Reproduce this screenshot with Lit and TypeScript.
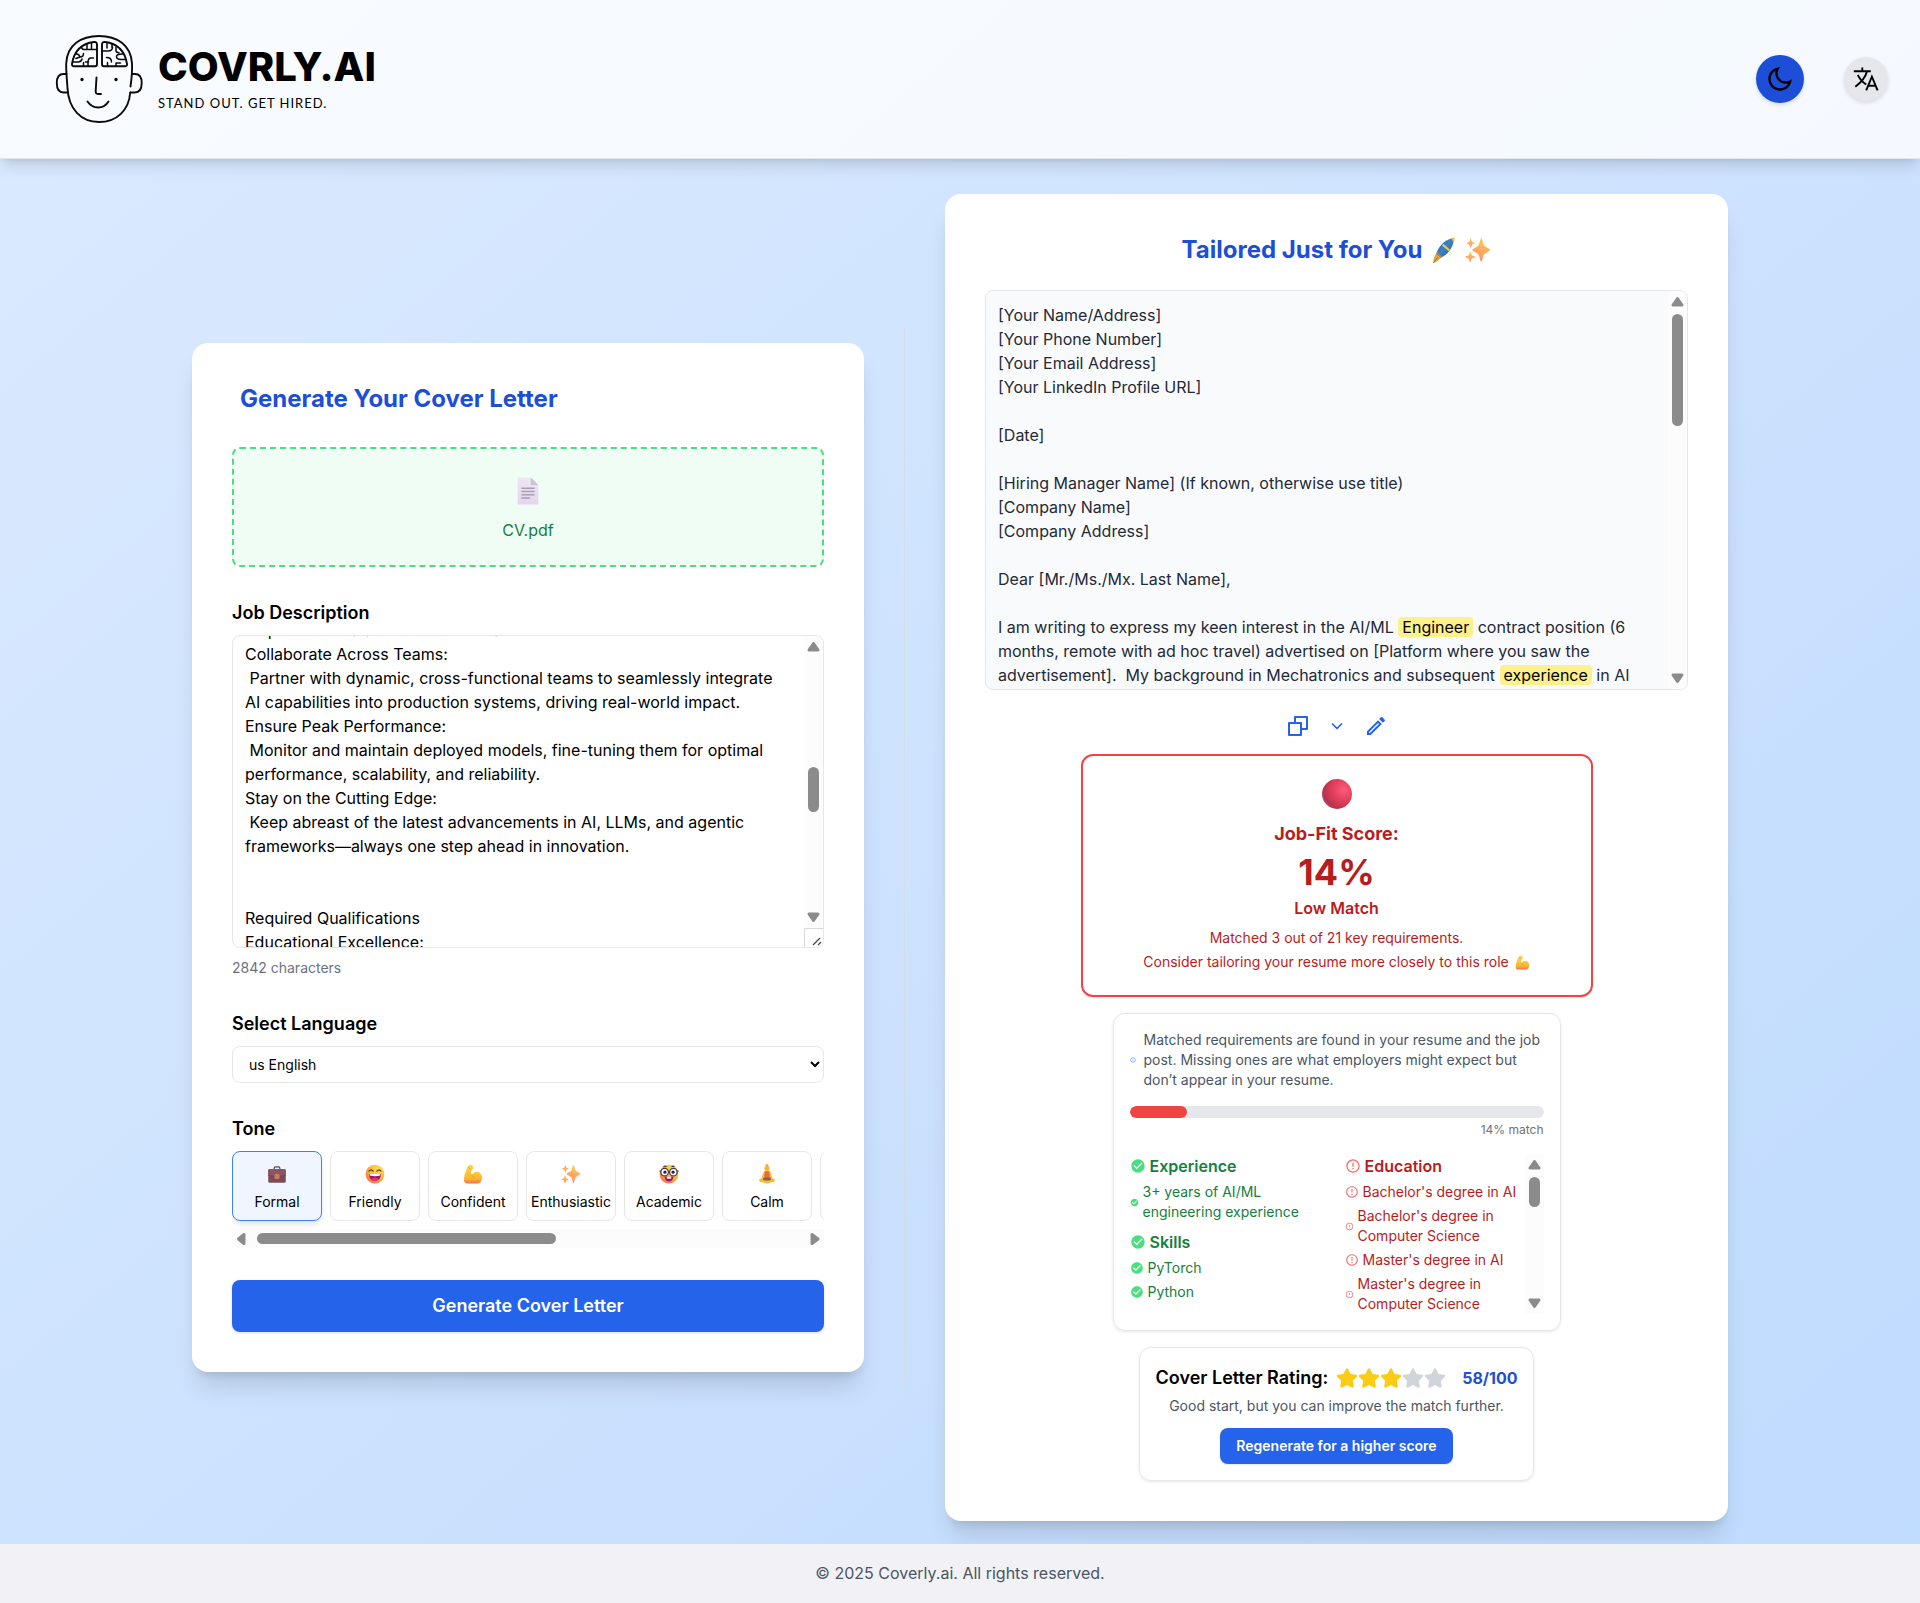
import { LitElement, html, svg, css } from "lit";
import { customElement, state, query } from "lit/decorators.js";
import { classMap } from "lit/directives/class-map.js";

const base = css`
  *,
  *::before,
  *::after {
    box-sizing: border-box;
  }
  :host {
    display: block;
    font-family: Inter, "Noto Sans", sans-serif;
    font-size: 16px;
    line-height: 24px;
  }
  h1, h2, h3, p, ul, pre {
    margin: 0;
    padding: 0;
  }
  ul {
    list-style: none;
  }
  button, select, textarea {
    font-family: inherit;
    color: inherit;
    margin: 0;
  }
  button {
    cursor: pointer;
  }
  svg {
    display: block;
    flex: none;
  }
`;

/* ---------- scroll bars ---------- */

@customElement("scroll-bar")
class ScrollBar extends LitElement {
  static properties = {
    horizontal: { type: Boolean, reflect: true },
    offset: { type: Number },
    length: { type: Number },
  };
  declare horizontal: boolean;
  declare offset: number;
  declare length: number;

  constructor() {
    super();
    this.horizontal = false;
    this.offset = 0;
    this.length = 40;
  }

  static styles = css`
    :host {
      display: flex;
      flex-direction: column;
      align-items: center;
      flex: none;
      width: 19px;
      background: #fcfcfc;
    }
    :host([horizontal]) {
      flex-direction: row;
      width: auto;
      height: 19px;
    }
    svg {
      display: block;
      flex: none;
      fill: #8b8b8b;
      stroke: #8b8b8b;
      stroke-width: 3;
      stroke-linejoin: round;
    }
    .track {
      flex: 1;
      display: flex;
      flex-direction: column;
      width: 11px;
      min-height: 0;
    }
    .thumb {
      border-radius: 6px;
      background: #8b8b8b;
    }
    :host([horizontal]) .track {
      flex-direction: row;
      width: auto;
      height: 11px;
    }
  `;

  render() {
    const h = this.horizontal;
    const first = h ? "M12 5.5v9L6.500 10z" : "M5 14h9L9.500 7.500z";
    const last = h ? "M7 5.500v9l6-4.500z" : "M5 5h9l-4.500 6.500z";
    const place = h
      ? `margin-left:${this.offset}%;width:${this.length}%`
      : `margin-top:${this.offset}px;height:${this.length}px`;
    return html`
      <svg width="19" height="19" viewBox="0 0 19 19" aria-hidden="true"><path d=${first} /></svg>
      <div class="track"><div class="thumb" style=${place}></div></div>
      <svg width="19" height="19" viewBox="0 0 19 19" aria-hidden="true"><path d=${last} /></svg>
    `;
  }
}

/* ---------- pictograms ---------- */

const yellow = (id: string) => svg`
  <radialGradient id=${id} cx="0.7" cy="0.25" r="0.9">
    <stop offset="0" stop-color="#ffe24f" /><stop offset="0.55" stop-color="#fdb52c" /><stop offset="1" stop-color="#f0624e" />
  </radialGradient>`;

const pictures: Record<string, unknown> = {
  page: svg`
    <defs><linearGradient id="pg" x1="0" y1="0" x2="0" y2="1"><stop offset="0" stop-color="#eee6f4" /><stop offset="1" stop-color="#e2d6ee" /></linearGradient></defs>
    <path d="M5 1.500h14l8 8V30.500H5z" fill="url(#pg)" /><path d="M19 1.500l8 8h-8z" fill="#c9c2d1" />
    <path d="M9 13h14M9 16.500h14M9 20h14M9 23.500h9" stroke="#a79fb3" stroke-width="1.500" />`,
  briefcase: svg`
    <path d="M11.500 9V6.500a2 2 0 0 1 2-2h5a2 2 0 0 1 2 2V9" fill="none" stroke="#5f4552" stroke-width="2" />
    <rect x="2" y="8" width="28" height="22" rx="2.500" fill="#7c4b58" />
    <path d="M2 10.500A2.500 2.500 0 0 1 4.500 8h23a2.500 2.500 0 0 1 2.500 2.500V18l-4 1.500H6L2 18z" fill="#8a5561" />
    <path d="M2 18.200l4 1.300h20l4-1.300" fill="none" stroke="#5f3a49" stroke-width="1" />
    <rect x="12" y="16" width="8" height="8" rx="2" fill="#cf7a5c" />`,
  grin: svg`
    <defs>${yellow("yg")}</defs><circle cx="16" cy="16" r="15" fill="url(#yg)" />
    <path d="M6.500 11.500q3.500-4.500 6.500 0M19 11.500q3.500-4.500 6.500 0" fill="none" stroke="#553148" stroke-width="2" stroke-linecap="round" />
    <path d="M6.500 16h19c0 7-4 11-9.500 11S6.500 23 6.500 16z" fill="#a50f73" /><path d="M7.500 16h17v2.500q-8.500 2.500-17 0z" fill="#fff" />
    <path d="M10.500 24q5.500-5 11 0-2 3-5.500 3t-5.500-3z" fill="#e8307d" />`,
  arm: svg`
    <defs><linearGradient id="am" x1="0.5" y1="0" x2="0.5" y2="1"><stop offset="0.2" stop-color="#ffd23c" /><stop offset="0.75" stop-color="#fdb62e" /><stop offset="1" stop-color="#ee7059" /></linearGradient></defs>
    <path d="M8 4c2-3 7-3 8 0 1 4-1 6-3 7-.5 3 .5 6 2 6 2-6 13-7 15 2 1 6-1 12-7 12H7c-4 0-6-2-5.500-7C2 17 5 9 8 4z" fill="url(#am)" />
    <path d="M14.500 17c0 3 2 5 4 5M9 5.500l3 3" stroke="#e2912a" stroke-width="1.300" fill="none" stroke-linecap="round" />`,
  sparkles: svg`
    <defs><linearGradient id="sp" x1="0.600" y1="0" x2="0.300" y2="1"><stop offset="0" stop-color="#ffc94c" /><stop offset="1" stop-color="#ff8f72" /></linearGradient></defs>
    <g fill="url(#sp)"><path d="M20 1.500c1.300 0 2 7 3.500 9S31 14.500 31 16s-6 3.500-7.500 5.500S21.300 30.500 20 30.500 18 23.500 16.500 21.500 9 17.500 9 16s6-3.500 7.500-5.500S18.700 1.500 20 1.500z" />
    <path d="M7 1.500c.800 0 1 3.500 1.700 4.200S12 6.800 12 7.500 9.500 8.600 8.700 9.400 7.800 13 7 13s-1-2.900-1.700-3.600S2 8.300 2 7.500s2.500-1.100 3.300-1.800S6.200 1.500 7 1.500z" />
    <path d="M6.500 18c.9 0 1.200 3.800 2 4.600s4 1.100 4 1.900-3.200 1.200-4 2-1.100 4.500-2 4.500-1.200-3.700-2-4.500-4-1.200-4-2 3.200-1.100 4-1.900 1.100-4.600 2-4.600z" /></g>`,
  nerd: svg`
    <defs>${yellow("yn")}</defs><circle cx="16" cy="16" r="15" fill="url(#yn)" />
    <path d="M9 20h14c0 5-3 8-7 8s-7-3-7-8z" fill="#a50f73" /><path d="M12.500 20h7v3.500h-7z" fill="#fff" />
    <g fill="#fff" stroke="#4d3b4b" stroke-width="2"><circle cx="9" cy="13" r="6" /><circle cx="23" cy="13" r="6" /></g>
    <path d="M15 12q1-1 2 0M0.800 11l2.200 1M31.200 11 29 12M7 4.500q3-2 5 0M20 4.500q2-2 5 0" fill="none" stroke="#4d3b4b" stroke-width="1.800" />
    <circle cx="9.500" cy="13" r="2.500" fill="#3a2438" /><circle cx="22.500" cy="13" r="2.500" fill="#3a2438" />`,
  lotus: svg`
    <circle cx="16" cy="2.800" r="2.300" fill="#e0a01f" /><circle cx="16" cy="6.800" r="4.200" fill="#f8b52f" />
    <path d="M11.500 11.500c2.500-1.500 6.500-1.500 9 0 2 3 3 7 4 11l-3 1-3-6v5h-5v-5l-3 6-3-1c1-4 2-8 4-11z" fill="#fbbd33" />
    <path d="M12.500 11.500h7l1 11h-9z" fill="#f4652f" />
    <path d="M3.500 25c3.500-3 8-3 12.500-2 4.500-1 9-1 12.500 2 1 3-2 4-5 4L16 31l-7.500-2c-3 0-6-1-5-4z" fill="#fdb92c" />
    <path d="M10.500 21.500h11l1 3.500q-6.500 3-13 0z" fill="#7b6073" />`,
  feather: svg`
    <defs><linearGradient id="ft" x1="0" y1="0" x2="1" y2="1"><stop offset="0" stop-color="#1f5f9f" /><stop offset="0.500" stop-color="#3b83c6" /><stop offset="1" stop-color="#1d558f" /></linearGradient></defs>
    <path d="M4 30.500c0-4 1-8 4-12l6 5c-3 3.500-6 5.500-9.500 7.500z" fill="#e0a443" />
    <path d="M7.500 20C10 11 17 4 26 1.500c1.500 0 2 1 2 2.500C27 13 21.500 20 13 24.500z" fill="url(#ft)" />
    <path d="M25 1.500l4.500-.5-1 6z" fill="#f6bc3e" /><path d="M15 9l8 7" stroke="#fbc441" stroke-width="2.500" /><path d="M8.200 18.500l5.500 5.500" stroke="#c98a2c" stroke-width="1.500" /><path d="M4 30.500l5-6" stroke="#8b5a2e" stroke-width="1" />`,
  ball: svg`
    <defs><radialGradient id="bl" cx="0.720" cy="0.360" r="0.750"><stop offset="0" stop-color="#ff5a7e" /><stop offset="0.550" stop-color="#dd3d58" /><stop offset="0.900" stop-color="#b5344d" /><stop offset="1" stop-color="#b0566b" /></radialGradient></defs>
    <circle cx="16" cy="16" r="15" fill="url(#bl)" />`,
};

const picture = (name: string, size: number) =>
  html`<svg width=${size} height=${size} viewBox="0 0 32 32" aria-hidden="true">${pictures[name]}</svg>`;

const glyphs = {
  moon: "M10 7C10 10.866 13.134 14 17 14C18.9584 14 20.729 13.1957 21.9995 11.8995C22 11.933 22 11.9665 22 12C22 17.5228 17.5228 22 12 22C6.47715 22 2 17.5228 2 12C2 6.47715 6.47715 2 12 2C12.0335 2 12.067 2 12.1005 2.00049C10.8043 3.27098 10 5.04157 10 7ZM4 12C4 16.4183 7.58172 20 12 20C15.0583 20 17.7158 18.2839 19.062 15.7621C18.3945 15.9187 17.7035 16 17 16C12.0294 16 8 11.9706 8 7C8 6.29648 8.08133 5.60547 8.2379 4.938C5.71611 6.28423 4 8.9417 4 12Z",
  pencil:
    "M14.06 9.02l.92.92L5.92 19H5v-.92l9.06-9.06M17.66 3c-.25 0-.51.1-.7.29l-1.83 1.83 3.75 3.75 1.83-1.83c.39-.39.39-1.02 0-1.41l-2.34-2.34c-.2-.2-.45-.29-.71-.29zm-3.6 3.19L3 17.25V21h3.75L17.81 9.94l-3.75-3.75z",
  check: "M12 2C6.48 2 2 6.48 2 12s4.48 10 10 10 10-4.48 10-10S17.52 2 12 2zm-2 15l-5-5 1.41-1.41L10 14.17l7.59-7.59L19 8l-9 9z",
  alert:
    "M11 15h2v2h-2zm0-8h2v6h-2zm.99-5C6.47 2 2 6.48 2 12s4.47 10 9.99 10C17.52 22 22 17.52 22 12S17.52 2 11.99 2zM12 20c-4.42 0-8-3.58-8-8s3.58-8 8-8 8 3.58 8 8-3.58 8-8 8z",
  info: "M11 7h2v2h-2zm0 4h2v6h-2zm1-9C6.48 2 2 6.48 2 12s4.48 10 10 10 10-4.48 10-10S17.52 2 12 2zm0 18c-4.41 0-8-3.59-8-8s3.59-8 8-8 8 3.59 8 8-3.59 8-8 8z",
};

const glyph = (name: keyof typeof glyphs, size: number) =>
  html`<svg width=${size} height=${size} viewBox="0 0 24 24" fill="currentColor" aria-hidden="true"><path d=${glyphs[name]} /></svg>`;

/* ---------- header ---------- */

@customElement("site-header")
class SiteHeader extends LitElement {
  static styles = [
    base,
    css`
      :host {
        position: relative;
      }
      header {
        display: flex;
        align-items: center;
        justify-content: space-between;
        height: 159px;
        padding: 0 32px 0 50px;
        background: rgba(255, 255, 255, 0.8);
        border-bottom: 1px solid #e5e7eb;
        box-shadow: 0 10px 15px -3px rgba(0, 0, 0, 0.12), 0 4px 6px -4px rgba(0, 0, 0, 0.12);
      }
      .brand {
        display: flex;
        align-items: center;
        gap: 8px;
        color: #000;
        text-decoration: none;
      }
      .words {
        display: flex;
        flex-direction: column;
        gap: 4px;
      }
      .name {
        font-size: 40px;
        line-height: 44px;
        font-weight: 800;
      }
      .tag {
        font-family: Lato, "Noto Sans", sans-serif;
        font-size: 13px;
        line-height: 20px;
        letter-spacing: 1px;
      }
      .tools {
        display: flex;
        align-items: center;
        gap: 40px;
      }
      .tool {
        display: grid;
        place-items: center;
        padding: 0;
        border: 0;
        border-radius: 50%;
        width: 44px;
        height: 44px;
        color: #000;
        background: #e5e7eb;
        box-shadow: 0 2px 4px rgba(0, 0, 0, 0.12);
      }
      .theme {
        width: 48px;
        height: 48px;
        background: #1d4ed8;
      }
    `,
  ];

  render() {
    return html`
      <header>
        <a class="brand" href="#">
          <svg width="100" height="96" viewBox="0 0 100 96" fill="none" stroke="#0b0b0b" stroke-width="1.900" stroke-linecap="round" stroke-linejoin="round" aria-hidden="true">
            <path d="M80.500 55.500c1-7 2-14 1.500-23C81 14 67 5 49 5S17 14 16.200 32.500C16 41 17 49 17.500 57 18.500 78 31 91 49 91s30-12 31.200-29.500" />
            <path d="M16.500 43h-3C8.500 43 6.800 46.500 6.800 52s1.700 9.500 6.700 9.500h4M82 43h3c5 0 6.700 4 6.700 9s-2 9.500-7 9.500h-4" />
            <path d="M47 13.500c0-2-1-2.700-3-2.500C31.500 12.500 24 20.500 22 33c-.2 1.500.5 2.200 2 2.200h21c1.300 0 2-.700 2-2zM52 13.500c0-2 1-2.700 3-2.500 12.500 1.500 20 9.500 22 22 .2 1.500-.500 2.200-2 2.200H54c-1.300 0-2-.700-2-2z" />
            <g stroke-width="1.500">
              <path d="M37 13v4.500M41.500 12v6.500H47M41.500 18.500h-7.500c-2 0-2.500-1.500-2.500-3M26.500 23c2 .2 3 1 3.500 3l-4 1.500M30 26c2.500 0 3.500-1.500 3.500-3.500M23 31h5c2.500 0 3.500-1 4-3M33.500 35v-3.500M38 35v-3.500c0-3 1.200-4.500 3-4.500h2.500M38.500 31h-3" />
              <path d="M57 12v5M62 13v4M52 20h6c3 0 4.500-1.500 4.500-4M66 16v3.500c0 1.500 1 2.200 3 2.200M72.500 23c-4 0-6 .5-6 2.500s1.500 3 4.500 3h4M56.500 26.500c3 0 5 1.200 5 4.500M66 35v-3h4.500M57.500 31.500V35" />
            </g>
            <path d="M46.500 46.500L45.700 60c-.1 2 .500 3 2.300 3h3M37.500 70.500c5.500 8 16 8 21 0" />
            <circle cx="32" cy="48.500" r="1.100" fill="#0b0b0b" stroke-width="1.200" /><circle cx="66" cy="48.500" r="1.100" fill="#0b0b0b" stroke-width="1.200" />
          </svg>
          <span class="words"><span class="name">COVRLY.AI</span><span class="tag">STAND OUT. GET HIRED.</span></span>
        </a>
        <div class="tools">
          <button class="tool theme" type="button" aria-label="Dark mode">${glyph("moon", 28)}</button>
          <button class="tool" type="button" aria-label="Change language">
            <svg width="26" height="24" viewBox="0 0 26 24" fill="none" stroke="currentColor" stroke-width="1.900" aria-hidden="true">
              <path d="M.8 4.200h17M9.300.500v3.700M14 4.500C12.500 10 8 15.500 2.300 19.700M4.800 7.800c1.700 3.800 4.700 7.200 8.400 9.700M13.200 23.300L18.900 9.700l5.700 13.600M15.200 18.700h7.400" />
            </svg>
          </button>
        </div>
      </header>
    `;
  }
}

/* ---------- form ---------- */

const jobText = ` Implement scalable AI solutions across cloud environments.
Collaborate Across Teams:
 Partner with dynamic, cross-functional teams to seamlessly integrate AI capabilities into production systems, driving real-world impact.
Ensure Peak Performance:
 Monitor and maintain deployed models, fine-tuning them for optimal performance, scalability, and reliability.
Stay on the Cutting Edge:
 Keep abreast of the latest advancements in AI, LLMs, and agentic frameworks—always one step ahead in innovation.


Required Qualifications
Educational Excellence:
 Bachelor's or Master's degree in Computer Science or AI.`;

const tones = [
  ["briefcase", "Formal"],
  ["grin", "Friendly"],
  ["arm", "Confident"],
  ["sparkles", "Enthusiastic"],
  ["nerd", "Academic"],
  ["lotus", "Calm"],
  ["feather", "Creative"],
];

@customElement("letter-form")
class LetterForm extends LitElement {
  @state() private tone = "Formal";
  @query("textarea") private area!: HTMLTextAreaElement;

  static styles = [
    base,
    css`
      form {
        display: flex;
        flex-direction: column;
        gap: 32px;
        padding: 40px;
        background: #fff;
        border-radius: 16px;
        box-shadow: 0 20px 25px -5px rgba(0, 0, 0, 0.12), 0 8px 10px -6px rgba(0, 0, 0, 0.12);
      }
      h2 {
        padding: 0 8px;
        font-size: 24px;
        line-height: 32px;
        font-weight: 700;
        color: #1d4ed8;
      }
      .drop {
        display: flex;
        flex-direction: column;
        align-items: center;
        justify-content: center;
        gap: 12px;
        height: 120px;
        padding-top: 4px;
        border: 2px dashed #4ade80;
        border-radius: 8px;
        background: #f0fdf4;
        color: #15803d;
      }
      .field {
        display: flex;
        flex-direction: column;
        gap: 8px;
        min-width: 0;
      }
      .label {
        font-size: 18px;
        line-height: 28px;
        font-weight: 600;
        color: #000;
      }
      .area {
        display: flex;
        height: 313px;
        border: 1px solid #e5e7eb;
        border-radius: 8px;
        overflow: hidden;
        background: #fff;
      }
      textarea {
        flex: 1;
        min-width: 0;
        padding: 12px;
        border: 0;
        outline: 0;
        resize: none;
        overflow: hidden;
        background: none;
        font-size: 16px;
        line-height: 24px;
        color: #000;
      }
      .side {
        display: flex;
        flex-direction: column;
        width: 19px;
      }
      .side scroll-bar {
        flex: 1;
      }
      .grip {
        height: 19px;
        border-top: 1px solid #d9d9d9;
        border-left: 1px solid #d9d9d9;
      }
      .count {
        padding-top: 2px;
        font-size: 14px;
        line-height: 20px;
        color: #6b7280;
      }
      select {
        width: 100%;
        height: 37px;
        padding: 0 0 0 12px;
        border: 1px solid #e5e7eb;
        border-radius: 8px;
        background-color: #fff;
        font-size: 14px;
        color: #000;
      }
      .tones {
        display: flex;
        gap: 8px;
        padding-bottom: 8px;
        overflow: hidden;
      }
      .tone {
        display: flex;
        flex: none;
        flex-direction: column;
        align-items: center;
        gap: 4px;
        width: 90px;
        height: 70px;
        padding: 8px 0;
        border: 1px solid #e5e7eb;
        border-radius: 8px;
        background: #fff;
        font-size: 14px;
        line-height: 20px;
        color: #000;
      }
      .tone.on {
        border-color: #3b82f6;
        background: #eff6ff;
        box-shadow: 0 4px 6px -1px rgba(0, 0, 0, 0.12);
      }
      .pic {
        display: grid;
        place-items: center;
        height: 28px;
      }
      .submit {
        height: 52px;
        border: 0;
        border-radius: 8px;
        background: #2563eb;
        box-shadow: 0 1px 3px rgba(0, 0, 0, 0.15);
        font-size: 18px;
        line-height: 28px;
        font-weight: 600;
        color: #fff;
      }
    `,
  ];

  firstUpdated() {
    this.area.scrollTop = 30;
    document.fonts?.ready.then(() => (this.area.scrollTop = 30));
  }

  render() {
    return html`
      <form @submit=${(e: Event) => e.preventDefault()}>
        <h2>Generate Your Cover Letter</h2>
        <div class="drop">${picture("page", 30)}<span>CV.pdf</span></div>
        <div class="field">
          <label class="label" for="job">Job Description</label>
          <div class="area">
            <textarea id="job" .value=${jobText}></textarea>
            <div class="side">
              <scroll-bar .offset=${112} .length=${45}></scroll-bar>
              <div class="grip">
                <svg width="18" height="18" viewBox="0 0 18 18" stroke="#444" stroke-width="1.300" aria-hidden="true"><path d="M8 16l7-7M13 16l3-3" /></svg>
              </div>
            </div>
          </div>
          <p class="count">2842 characters</p>
        </div>
        <div class="field">
          <label class="label" for="lang">Select Language</label>
          <select id="lang"><option>us English</option></select>
        </div>
        <div class="field">
          <span class="label" id="tone">Tone</span>
          <div>
            <div class="tones" role="group" aria-labelledby="tone">
              ${tones.map(
                ([pic, name]) => html`<button
                  type="button"
                  class=${classMap({ tone: true, on: name === this.tone })}
                  aria-pressed=${name === this.tone}
                  @click=${() => (this.tone = name)}
                >
                  <span class="pic">${picture(pic, 20)}</span>${name}
                </button>`
              )}
            </div>
            <scroll-bar horizontal .offset=${1} .length=${54}></scroll-bar>
          </div>
        </div>
        <button class="submit" type="submit">Generate Cover Letter</button>
      </form>
    `;
  }
}

/* ---------- result ---------- */

type Item = [text: string, icon: number];
const matched: [string, Item[]][] = [
  ["Experience", [["3+ years of AI/ML engineering experience", 9]]],
  ["Skills", [["PyTorch", 14], ["Python", 14]]],
];
const missing: [string, Item[]][] = [
  [
    "Education",
    [
      ["Bachelor's degree in AI", 14],
      ["Bachelor's degree in Computer Science", 9],
      ["Master's degree in AI", 14],
      ["Master's degree in Computer Science", 9],
    ],
  ],
];

@customElement("letter-result")
class LetterResult extends LitElement {
  private score = 14;

  static styles = [
    base,
    css`
      section {
        display: flex;
        flex-direction: column;
        align-items: center;
        gap: 16px;
        padding: 40px;
        background: #fff;
        border-radius: 16px;
        box-shadow: 0 20px 25px -5px rgba(0, 0, 0, 0.12), 0 8px 10px -6px rgba(0, 0, 0, 0.12);
      }
      h2 {
        display: flex;
        align-items: center;
        gap: 8px;
        margin-bottom: 8px;
        font-size: 24px;
        line-height: 32px;
        font-weight: 700;
        color: #1d4ed8;
      }
      .letter {
        display: flex;
        width: 100%;
        height: 400px;
        border: 1px solid #e5e7eb;
        border-radius: 8px;
        overflow: hidden;
        background: #f9fafb;
      }
      .text {
        flex: 1;
        min-width: 0;
        padding: 12px;
        overflow: hidden;
        font-family: inherit;
        white-space: pre-wrap;
        color: #1f2937;
      }
      mark {
        padding: 0 4px;
        border-radius: 4px;
        background: #fef08a;
        color: #000;
      }
      .actions {
        display: flex;
        align-items: center;
        gap: 19px;
        padding-top: 8px;
      }
      .actions button {
        display: block;
        padding: 0;
        border: 0;
        background: none;
        color: #2563eb;
      }
      .fit {
        display: flex;
        flex-direction: column;
        align-items: center;
        width: 100%;
        max-width: 512px;
        padding: 20px 20px 21px;
        border: 2px solid #ef4444;
        border-radius: 12px;
        color: #b91c1c;
        text-align: center;
        box-shadow: 0 1px 2px rgba(0, 0, 0, 0.08);
      }
      .ball {
        display: grid;
        place-items: center;
        height: 36px;
        margin-bottom: 8px;
      }
      .fit h3 {
        font-size: 18px;
        line-height: 28px;
        font-weight: 700;
      }
      .percent {
        margin: 4px 0;
        font-size: 36px;
        line-height: 40px;
        font-weight: 700;
      }
      .level {
        margin-bottom: 6px;
        font-weight: 600;
      }
      .note {
        display: flex;
        align-items: center;
        gap: 6px;
        font-size: 14px;
      }
      .card {
        width: 100%;
        max-width: 448px;
        padding: 16px;
        border: 1px solid #e5e7eb;
        border-radius: 12px;
        box-shadow: 0 1px 3px rgba(0, 0, 0, 0.1);
        font-size: 14px;
        line-height: 20px;
      }
      .hint {
        display: flex;
        align-items: center;
        gap: 8px;
        color: #4b5563;
      }
      .hint svg {
        color: #3b82f6;
      }
      .bar {
        height: 12px;
        margin: 16px 0 4px;
        border-radius: 6px;
        background: #e5e7eb;
        overflow: hidden;
      }
      .fill {
        height: 12px;
        border-radius: 6px;
        background: #ef4444;
      }
      .value {
        margin-bottom: 16px;
        font-size: 12px;
        line-height: 16px;
        text-align: right;
        color: #6b7280;
      }
      .lists {
        display: grid;
        grid-template-columns: 1fr 1fr;
        gap: 16px;
        height: 160px;
      }
      .list {
        display: flex;
        min-width: 0;
      }
      .groups {
        display: flex;
        flex: 1;
        flex-direction: column;
        gap: 8px;
        min-width: 0;
      }
      .row {
        display: flex;
        align-items: center;
        gap: 4px;
      }
      .groups h4 {
        margin: 0;
        font-size: 16px;
        line-height: 24px;
        font-weight: 600;
      }
      li {
        margin-top: 4px;
      }
      .good {
        color: #15803d;
      }
      .good svg {
        color: #4ade80;
      }
      .bad {
        color: #b91c1c;
      }
      .bad svg {
        color: #f87171;
      }
      .rating {
        display: flex;
        flex-direction: column;
        align-items: center;
        width: auto;
      }
      .rate {
        display: flex;
        align-items: center;
        gap: 8px;
        font-size: 18px;
        line-height: 28px;
        font-weight: 600;
        color: #000;
      }
      .stars {
        display: flex;
        margin-right: 8px;
        color: #d1d5db;
      }
      .stars .lit {
        color: #facc15;
      }
      .points {
        font-size: 16px;
        font-weight: 700;
        color: #1d4ed8;
      }
      .advice {
        margin: 4px 0 12px;
        color: #4b5563;
      }
      .again {
        height: 36px;
        padding: 0 16px;
        border: 0;
        border-radius: 8px;
        background: #2563eb;
        box-shadow: 0 1px 2px rgba(0, 0, 0, 0.1);
        font-size: 14px;
        line-height: 20px;
        font-weight: 600;
        color: #fff;
      }
    `,
  ];

  private groups(data: [string, Item[]][], icon: "check" | "alert") {
    return html`<div class="groups">
      ${data.map(
        ([title, items]) => html`<div>
          <h4 class="row">${glyph(icon, 16)}${title}</h4>
          <ul>
            ${items.map(([text, size]) => html`<li class="row">${glyph(icon, size)}<span>${text}</span></li>`)}
          </ul>
        </div>`
      )}
    </div>`;
  }

  render() {
    const letter = html`[Your Name/Address]
[Your Phone Number]
[Your Email Address]
[Your LinkedIn Profile URL]

[Date]

[Hiring Manager Name] (If known, otherwise use title)
[Company Name]
[Company Address]

Dear [Mr./Ms./Mx. Last Name],

I am writing to express my keen interest in the AI/ML <mark>Engineer</mark> contract position (6 months, remote with ad hoc travel) advertised on [Platform where you saw the advertisement].  My background in Mechatronics and subsequent <mark>experience</mark> in AI`;
    return html`
      <section>
        <h2>Tailored Just for You ${picture("feather", 27)}${picture("sparkles", 26)}</h2>
        <div class="letter">
          <pre class="text">${letter}</pre>
          <scroll-bar .offset=${4} .length=${112}></scroll-bar>
        </div>
        <div class="actions">
          <button type="button" aria-label="Copy">
            <svg width="24" height="24" viewBox="0 0 24 24" fill="none" stroke="currentColor" stroke-width="2" stroke-linejoin="round"><path d="M3 9h12v12H3zM9 9V3h12v12h-6" /></svg>
          </button>
          <button type="button" aria-label="More options">
            <svg width="16" height="16" viewBox="0 0 16 16" fill="none" stroke="currentColor" stroke-width="1.700" stroke-linecap="round" stroke-linejoin="round"><path d="M3.500 6L8 10.500 12.500 6" /></svg>
          </button>
          <button type="button" aria-label="Edit">${glyph("pencil", 24)}</button>
        </div>
        <div class="fit">
          <div class="ball">${picture("ball", 32)}</div>
          <h3>Job-Fit Score:</h3>
          <p class="percent">${this.score}%</p>
          <p class="level">Low Match</p>
          <p class="note">Matched 3 out of 21 key requirements.</p>
          <p class="note">Consider tailoring your resume more closely to this role ${picture("arm", 15)}</p>
        </div>
        <div class="card">
          <p class="hint">
            ${glyph("info", 6)}<span>Matched requirements are found in your resume and the job post. Missing ones are what employers might expect but don’t appear in your resume.</span>
          </p>
          <div class="bar"><div class="fill" style="width:${this.score}%"></div></div>
          <p class="value">${this.score}% match</p>
          <div class="lists">
            <div class="list good">${this.groups(matched, "check")}</div>
            <div class="list bad">
              ${this.groups(missing, "alert")}
              <scroll-bar .offset=${4} .length=${30}></scroll-bar>
            </div>
          </div>
        </div>
        <div class="card rating">
          <div class="rate">
            Cover Letter Rating:
            <span class="stars">
              ${[1, 2, 3, 4, 5].map(
                (n) => html`<svg class=${classMap({ lit: n <= 3 })} width="22" height="22" viewBox="0 0 576 512" fill="currentColor" aria-hidden="true">
                  <path d="M259.3 17.8L194 150.2 47.9 171.5c-26.2 3.8-36.7 36.1-17.7 54.6l105.7 103-25 145.5c-4.5 26.3 23.2 46 46.4 33.7L288 439.6l130.7 68.7c23.2 12.2 50.9-7.4 46.4-33.7l-25-145.5 105.7-103c19-18.5 8.5-50.8-17.7-54.6L382 150.2 316.7 17.8c-11.7-23.6-45.6-23.9-57.4 0z" />
                </svg>`
              )}
            </span>
            <span class="points">58/100</span>
          </div>
          <p class="advice">Good start, but you can improve the match further.</p>
          <button class="again" type="button">Regenerate for a higher score</button>
        </div>
      </section>
    `;
  }
}

/* ---------- page ---------- */

@customElement("app-root")
class AppRoot extends LitElement {
  static styles = [
    base,
    css`
      :host {
        display: flex;
        flex-direction: column;
        min-height: 100vh;
        background: linear-gradient(to bottom right, #dbeafe, #bfdbfe);
      }
      main {
        display: grid;
        flex: 1;
        grid-template-columns: minmax(0, 672px) 1px minmax(0, 1fr);
        align-items: center;
        gap: 40px;
        width: 100%;
        max-width: 1536px;
        margin: 0 auto;
        padding: 35px 0 23px;
      }
      .divider {
        height: 80%;
        background: #d5dce6;
      }
      footer {
        padding: 17px 16px 18px;
        background: #f1f1f6;
        color: #4b5563;
        text-align: center;
      }
    `,
  ];

  render() {
    return html`
      <site-header></site-header>
      <main>
        <letter-form></letter-form>
        <div class="divider"></div>
        <letter-result></letter-result>
      </main>
      <footer>© 2025 Coverly.ai. All rights reserved.</footer>
    `;
  }
}
